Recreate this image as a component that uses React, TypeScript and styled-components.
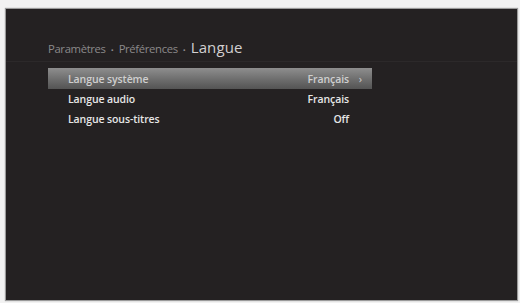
import styled, { createGlobalStyle } from 'styled-components';

const GlobalStyle = createGlobalStyle`
  html, body {
    margin: 0;
    padding: 0;
    background: #f4f4f4;
    font-family: "Open Sans", "DejaVu Sans", sans-serif;
  }
`;

const rows = [
  { label: 'Langue système', value: 'Français', selected: true },
  { label: 'Langue audio', value: 'Français', selected: false },
  { label: 'Langue sous-titres', value: 'Off', selected: false },
];

const App = () => {
  return (
    <>
      <GlobalStyle />
      <Page>
        <Screen>
          <Header>
            <Crumb>Paramètres</Crumb>
            <Dot>•</Dot>
            <Crumb>Préférences</Crumb>
            <Dot>•</Dot>
            <Title>Langue</Title>
          </Header>
          <Menu>
            {rows.map((row) => (
              <Row key={row.label} selected={row.selected}>
                <Label>{row.label}</Label>
                <Value>{row.value}</Value>
                <Arrow>{row.selected ? '›' : ''}</Arrow>
              </Row>
            ))}
          </Menu>
        </Screen>
      </Page>
    </>
  );
};

export default App;

const Page = styled.div`
  width: 520px;
  height: 303px;
  padding: 9px 3px 3px 6px;
  box-sizing: border-box;
  background: #f2f2f2;
`;

const Screen = styled.div`
  width: 511px;
  height: 291px;
  background: #242122;
  box-shadow: 0 0 1px 1px #9a9a9a;
  padding: 28px 0 0 42px;
  box-sizing: border-box;
`;

const Header = styled.div`
  display: flex;
  align-items: baseline;
  gap: 5px;
  height: 24px;
  color: #8b898a;
  border-bottom: 1px solid #2c292a;
  margin-left: -42px;
  padding-left: 42px;
`;

const Crumb = styled.span`
  font-size: 11.3px;
  letter-spacing: -0.35px;
`;

const Dot = styled.span`
  font-size: 8px;
`;

const Title = styled.span`
  font-size: 15px;
  color: #d2d0d1;
  letter-spacing: 0.1px;
`;

const Menu = styled.div`
  display: flex;
  flex-direction: column;
  width: 324px;
  margin-top: 6px;
`;

const Row = styled.div<{ selected: boolean }>`
  display: flex;
  align-items: center;
  height: ${({ selected }) => (selected ? '21px' : '20px')};
  padding: 0 10px 0 20px;
  background: ${({ selected }) =>
    selected ? 'linear-gradient(#8e8e8e, #6d6d6d 55%, #545454)' : 'transparent'};
  color: ${({ selected }) => (selected ? '#cfcfcf' : '#e6e6e6')};
  font-size: 10.5px;
  font-weight: 600;
  letter-spacing: -0.1px;
`;

const Label = styled.span`
  flex: 1;
`;

const Value = styled.span``;

const Arrow = styled.span`
  width: 13px;
  text-align: right;
  font-size: 11px;
  font-weight: 400;
`;
